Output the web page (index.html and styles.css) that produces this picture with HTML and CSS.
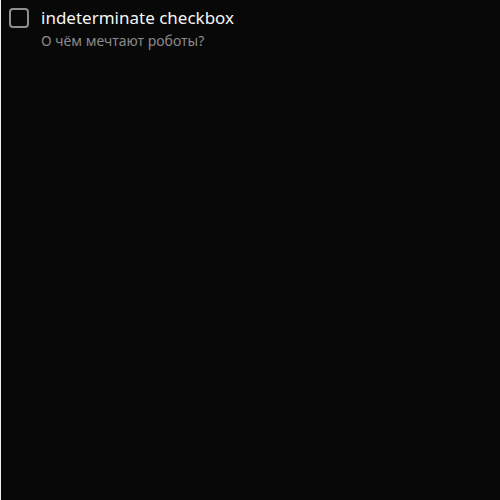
FILE: index.html
```html
<!DOCTYPE html>
<html lang="ru">
<head>
<meta charset="utf-8">
<title>Checkbox</title>
<link rel="stylesheet" href="styles.css">
</head>
<body>
<main class="page">
<div class="checkbox">
<input class="checkbox-input" type="checkbox" id="dreams" aria-describedby="dreams-hint">
<div class="checkbox-content">
<label class="checkbox-label" for="dreams">indeterminate checkbox</label>
<div class="checkbox-hint" id="dreams-hint">О чём мечтают роботы?</div>
</div>
</div>
</main>
</body>
</html>
```
FILE: styles.css
```css
body {
  margin: 0;
  background: #080808;
  color: #f5f5f5;
  font-family: "Noto Sans", "Open Sans", sans-serif;
}

.page {
  box-sizing: border-box;
  min-height: 100vh;
  padding: 8px;
  border-left: 1px solid #f0f0f0;
}

.checkbox {
  display: flex;
  align-items: flex-start;
  gap: 12px;
}

.checkbox-input {
  appearance: none;
  box-sizing: border-box;
  flex: none;
  width: 20px;
  height: 20px;
  margin: 0;
  border: 2px solid #8f8f8f;
  border-radius: 4px;
}

.checkbox-label {
  display: block;
  font-size: 17px;
  line-height: 20px;
}

.checkbox-hint {
  margin-top: 4px;
  color: #8a8a8a;
  font-size: 14px;
  line-height: 18px;
}
```
